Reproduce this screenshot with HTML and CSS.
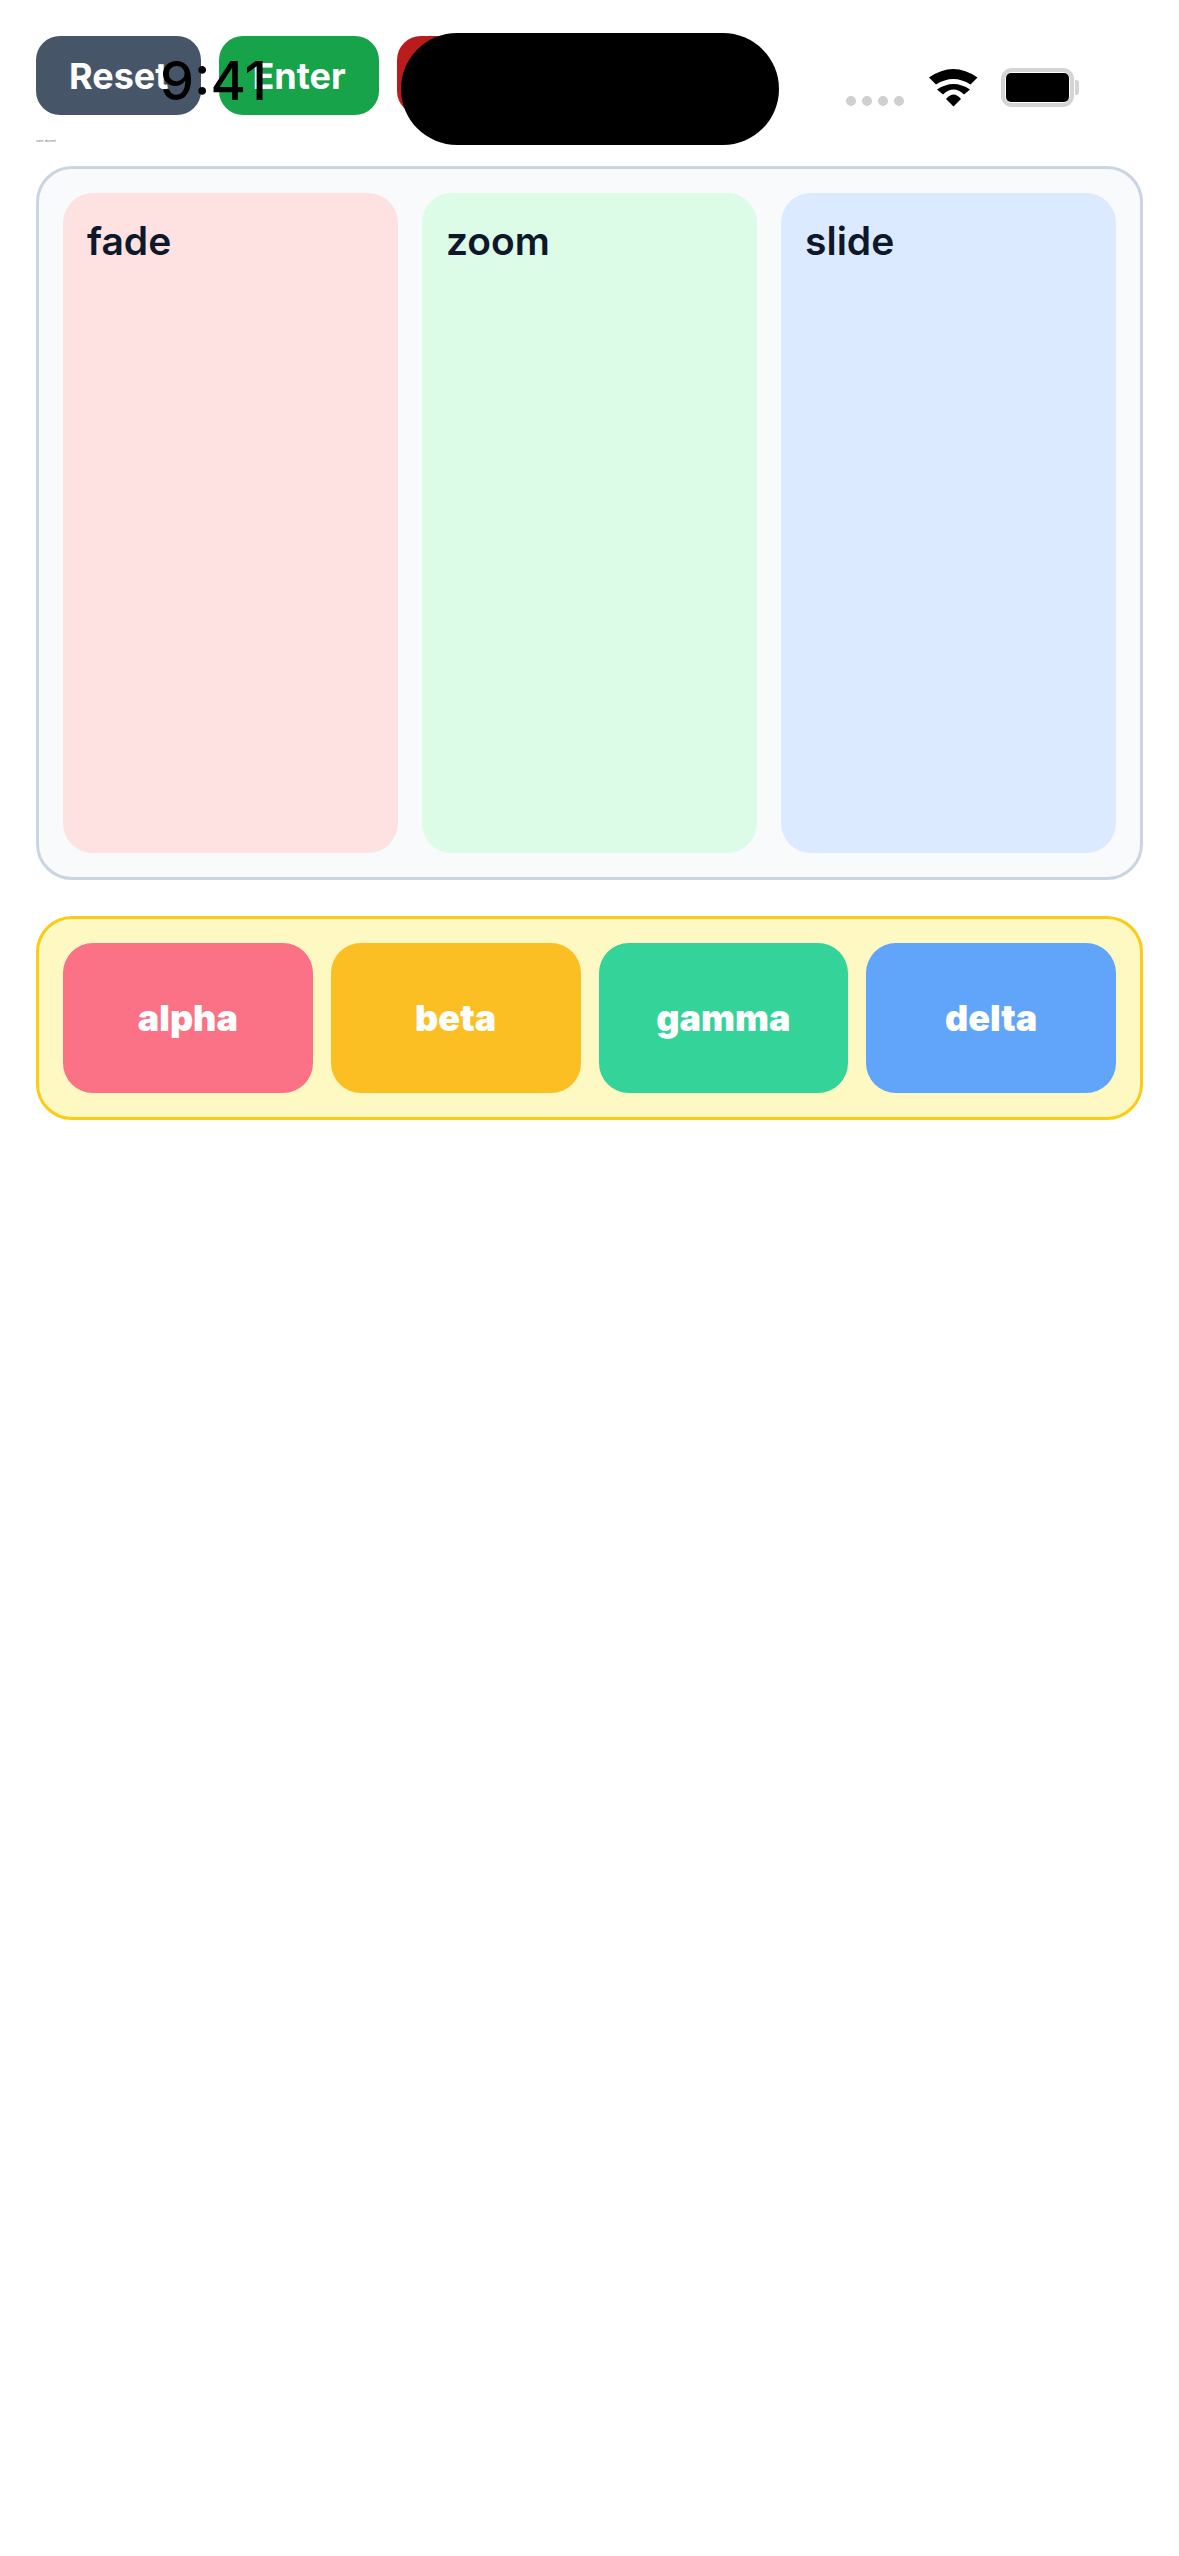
FILE: index.html
```html
<!DOCTYPE html>
<html lang="en">
<head>
    <meta charset="UTF-8">
    <meta name="viewport" content="width=device-width, initial-scale=1.0">
    <title>Transitions</title>
    <link rel="stylesheet" href="styles.css">
</head>
<body>
    <div class="status-bar">
        <span class="clock">9:41</span>
        <div class="island"></div>
        <div class="signal"><i></i><i></i><i></i><i></i></div>
        <svg class="wifi" viewBox="0 0 49 38" width="49" height="38">
            <path d="M0 8.500Q24.250 -8.500 48.500 8.500L41.500 15.500Q24.250 4.500 7 15.500Z"/>
            <path d="M8 20.500Q24.500 9.500 41 20.500L35 25.500Q24.500 15.500 14 25.500Z"/>
            <path d="M17 30Q24.500 21 32 30L24.500 37.500Z"/>
        </svg>
        <div class="battery"><div class="battery-fill"></div></div>
        <div class="battery-cap"></div>
    </div>

    <div class="controls">
        <button class="ctrl-btn reset-btn">Reset</button>
        <button class="ctrl-btn enter-btn">Enter</button>
        <button class="ctrl-btn exit-btn">Exit</button>
    </div>
    <div class="state-label">state: aborted</div>

    <div class="panel stage">
        <div class="stage-card fade-card">fade</div>
        <div class="stage-card zoom-card">zoom</div>
        <div class="stage-card slide-card">slide</div>
    </div>

    <div class="panel tray">
        <div class="tray-item alpha">alpha</div>
        <div class="tray-item beta">beta</div>
        <div class="tray-item gamma">gamma</div>
        <div class="tray-item delta">delta</div>
    </div>
</body>
</html>
```

FILE: styles.css
```css
* {
    box-sizing: border-box;
    margin: 0;
    padding: 0;
}

body {
    font-family: Inter, "Liberation Sans", sans-serif;
    background-color: white;
    padding: 36px;
    min-height: 2556px;
    position: relative;
}

.status-bar {
    position: absolute;
    top: 0;
    left: 0;
    width: 100%;
    height: 150px;
}

.clock {
    position: absolute;
    left: 160px;
    top: 50px;
    font-size: 54px;
    font-weight: 500;
    line-height: 62px;
    color: black;
}

.island {
    position: absolute;
    left: 401px;
    top: 33px;
    width: 378px;
    height: 112px;
    background-color: black;
    border-radius: 56px;
}

.signal {
    position: absolute;
    left: 846px;
    top: 96px;
    display: flex;
    gap: 6px;
}

.signal i {
    width: 10px;
    height: 10px;
    border-radius: 50%;
    background-color: #cfcfcf;
}

.wifi {
    position: absolute;
    left: 929px;
    top: 69px;
}

.battery {
    position: absolute;
    left: 1001px;
    top: 68px;
    width: 73px;
    height: 39px;
    padding: 1px;
    border: 4px solid #d4d4d4;
    border-radius: 11px;
}

.battery-fill {
    height: 100%;
    background-color: black;
    border-radius: 5px;
}

.battery-cap {
    position: absolute;
    left: 1075px;
    top: 80px;
    width: 4px;
    height: 15px;
    background-color: #d4d4d4;
    border-radius: 0 3px 3px 0;
}

.controls {
    display: flex;
    gap: 18px;
}

.ctrl-btn {
    height: 79px;
    padding: 0 33px;
    border: none;
    border-radius: 24px;
    color: white;
    font-family: inherit;
    font-size: 36px;
    font-weight: 700;
}

.reset-btn {
    background-color: #475569;
}

.enter-btn {
    background-color: #16a34a;
}

.exit-btn {
    background-color: #b91c1c;
}

.state-label {
    margin-top: 22px;
    margin-bottom: 20px;
    height: 9px;
    font-size: 3px;
    line-height: 9px;
    color: #64748b;
}

.panel {
    border-radius: 36px;
    padding: 24px;
}

.stage {
    display: grid;
    grid-template-columns: repeat(3, 1fr);
    gap: 24px;
    height: 714px;
    background-color: #f8fafc;
    border: 3px solid #cbd5e1;
}

.stage-card {
    padding: 24px;
    border-radius: 30px;
    color: #0f172a;
    font-size: 39px;
    font-weight: 600;
}

.fade-card {
    background-color: #fee2e2;
}

.zoom-card {
    background-color: #dcfce7;
}

.slide-card {
    background-color: #dbeafe;
}

.tray {
    display: grid;
    grid-template-columns: repeat(4, 1fr);
    gap: 18px;
    margin-top: 36px;
    height: 204px;
    background-color: #fef9c3;
    border: 3px solid #facc15;
}

.tray-item {
    display: flex;
    align-items: center;
    justify-content: center;
    border-radius: 30px;
    color: white;
    font-size: 36px;
    font-weight: 900;
}

.alpha {
    background-color: #fb7185;
}

.beta {
    background-color: #fbbf24;
}

.gamma {
    background-color: #34d399;
}

.delta {
    background-color: #60a5fa;
}
```
